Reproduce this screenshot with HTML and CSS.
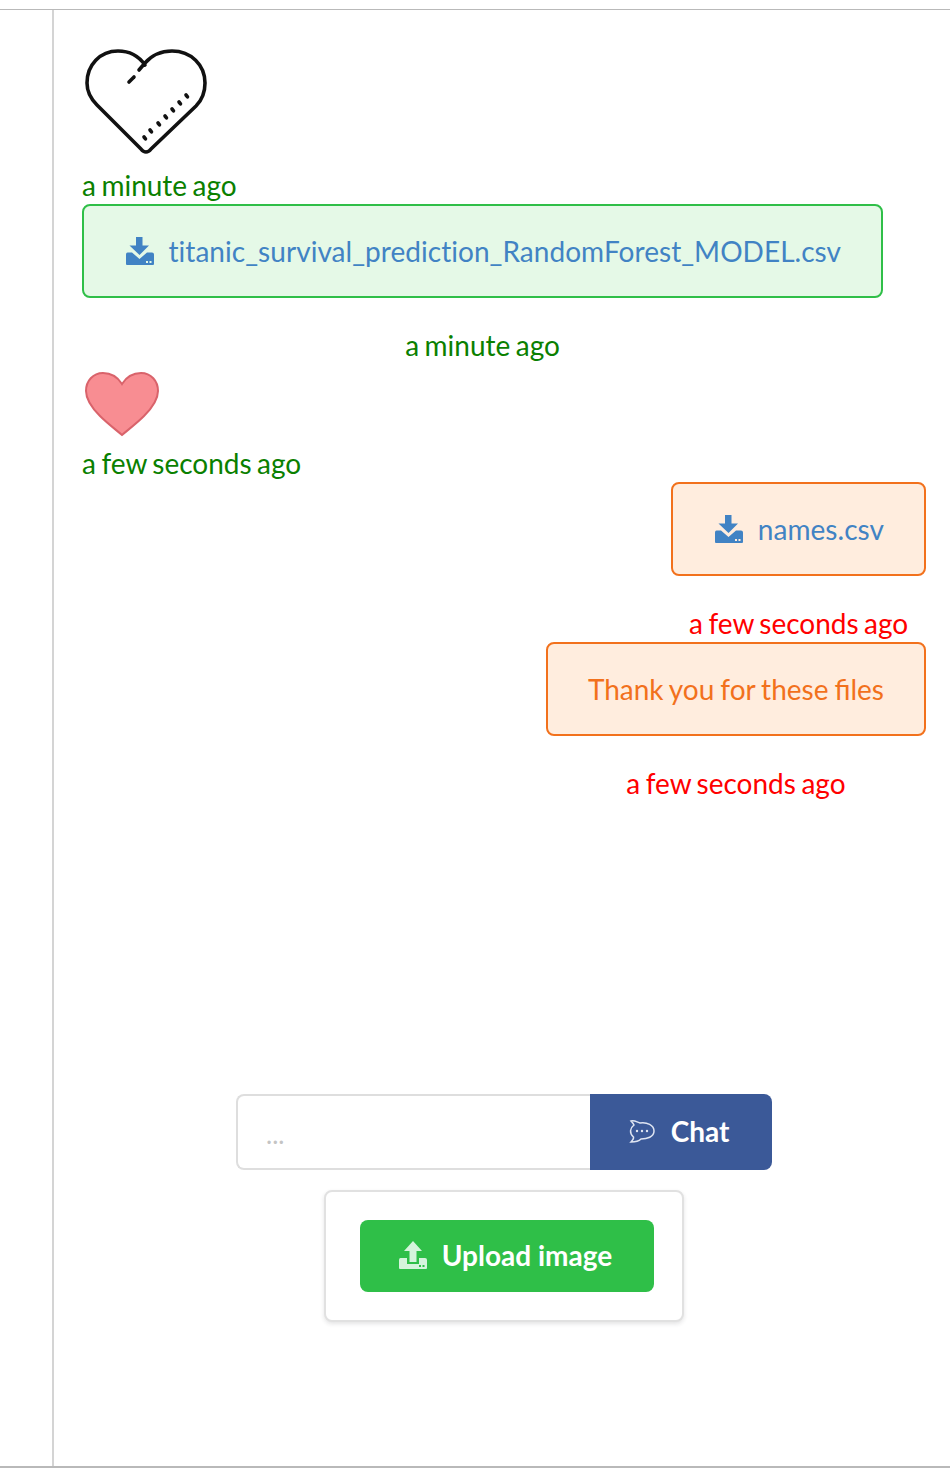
FILE: index.html
```html
<!DOCTYPE html>
<html lang="en">
<head>
  <meta charset="UTF-8">
  <title>Chat</title>
  <link rel="stylesheet" href="styles.css">
</head>
<body>
  <div class="frame">
    <div class="rail"></div>
    <div class="main">
      <div class="messages">

        <div class="msg">
          <svg class="heart-outline" viewBox="0 0 126 110" fill="none" stroke="#111" stroke-width="3.6" stroke-linecap="round" stroke-linejoin="round">
            <path d="M63 19 C56 9 47 5 36 5 C18 5 5 19 5 37 C5 46 9 53 15 59 L59 103 C62 107 66 107 69 103 L114 60 C120 54 123 46 123 37 C123 19 109 5 90 5 C79 5 70 9 63 17 L57 24"/>
            <path d="M52 31 L47 36"/>
            <path d="M62 91 l1.500 1.800 M68 84 l1.500 1.800 M76 77 l1.500 1.800 M83 70 l1.500 1.800 M90 63 l1.500 1.800 M97 56 l1.500 1.800 M104 49 l1.500 1.800"/>
          </svg>
          <div class="time time-green">a minute ago</div>
        </div>

        <div class="msg msg-file">
          <div class="box box-green">
            <a class="file-link" href="#">
              <svg class="tray-icon" viewBox="0 0 30 30"><path fill="#4183c4" d="M12 1 H18.500 V9.500 H25 L15.500 19 L5.500 9.500 H12 Z"/><path fill="#4183c4" d="M3.500 16.500 H8 L15.500 23 L23 16.500 H28 Q30 16.500 30 18.500 V28 Q30 29 29 29 H3 Q2 29 2 28 V18.500 Q2 16.500 3.500 16.500 Z"/><path fill="#e5f9e7" d="M22 25 h2 v2 h-2z M25.500 25 h2 v2 h-2z"/></svg>
              titanic_survival_prediction_RandomForest_MODEL.csv
            </a>
          </div>
          <div class="time time-green">a minute ago</div>
        </div>

        <div class="msg msg-like">
          <svg class="heart-full" viewBox="0 0 76 66">
            <path fill="#f88d92" stroke="#d9636b" stroke-width="2" d="M38 13 C33 5 27 2 19 2 C9 2 2 10 2 20 C2 30 9 38 16 45 C23 52 31 58 38 64 C45 58 53 52 60 45 C67 38 74 30 74 20 C74 10 67 2 57 2 C49 2 43 5 38 13 Z"/>
          </svg>
          <div class="time time-green">a few seconds ago</div>
        </div>

        <div class="msg msg-file msg-right">
          <div class="box box-orange">
            <a class="file-link" href="#">
              <svg class="tray-icon" viewBox="0 0 30 30"><path fill="#4183c4" d="M12 1 H18.500 V9.500 H25 L15.500 19 L5.500 9.500 H12 Z"/><path fill="#4183c4" d="M3.500 16.500 H8 L15.500 23 L23 16.500 H28 Q30 16.500 30 18.500 V28 Q30 29 29 29 H3 Q2 29 2 28 V18.500 Q2 16.500 3.500 16.500 Z"/><path fill="#ffedde" d="M22 25 h2 v2 h-2z M25.500 25 h2 v2 h-2z"/></svg>
              names.csv
            </a>
          </div>
          <div class="time time-red">a few seconds ago</div>
        </div>

        <div class="msg msg-file msg-right">
          <div class="box box-orange box-text">Thank you for these files</div>
          <div class="time time-red">a few seconds ago</div>
        </div>

      </div>

      <div class="composer">
        <div class="chat-form">
          <input class="chat-input" type="text" placeholder="...">
          <button class="chat-btn" type="button">
            <svg class="chat-icon" viewBox="0 0 26 24" fill="none" stroke="#dfe5f2" stroke-width="1.500">
              <path d="M2 2 C5 1 8 3 11 4 C18 3 25 6 25 12 C25 18 18 20 12 20 C9 23 6 23 2 23 C4 21 5 20 4.500 18 C0 14 1 9 5 6 C4 4 3 3 2 2 Z"/>
              <circle cx="8" cy="12" r="1.200" fill="#dfe5f2" stroke="none"/><circle cx="13" cy="12" r="1.200" fill="#dfe5f2" stroke="none"/><circle cx="18" cy="12" r="1.200" fill="#dfe5f2" stroke="none"/>
            </svg>
            Chat
          </button>
        </div>
        <div class="upload-card">
          <button class="upload-btn" type="button">
            <svg class="tray-icon" viewBox="0 0 30 30"><path fill="#d5f4dc" d="M15 1 L24 11 H18.500 V22 H11.500 V11 H6 Z"/><path fill="#d5f4dc" d="M2.500 18 H9 V24 H21 V18 H27 Q29 18 29 20 V28 Q29 29 28 29 H2 Q1 29 1 28 V20 Q1 18 2.500 18 Z"/><path fill="#2fbf48" d="M21 25 h2 v2 h-2z M24.500 25 h2 v2 h-2z"/></svg>
            Upload image
          </button>
        </div>
      </div>
    </div>
  </div>
</body>
</html>
```

FILE: styles.css
```css
body {
  margin: 0;
  background: #fff;
  font-family: Lato, "Open Sans", sans-serif;
  font-size: 28px;
  line-height: 34px;
}

.frame {
  display: flex;
  margin-top: 9px;
  height: 1456px;
  border-top: 1px solid #b9b9b9;
  border-bottom: 2px solid #b9b9b9;
}

.rail {
  flex: none;
  width: 52px;
  border-right: 2px solid #d4d4d4;
}

.main {
  flex: 1;
  padding: 36px 24px 0 28px;
}

.messages {
  display: flex;
  flex-direction: column;
  height: 1048px;
}

.msg {
  display: flex;
  flex-direction: column;
  align-items: flex-start;
}

.msg-file {
  width: fit-content;
  align-items: center;
}

.msg-right {
  align-self: flex-end;
}

.heart-outline {
  display: block;
  width: 126px;
  height: 110px;
  margin-bottom: 14px;
}

.heart-full {
  display: block;
  width: 76px;
  height: 66px;
  margin: 7px 0 11px 2px;
}

.time {
  height: 34px;
  line-height: 30px;
  word-spacing: -1.7px;
}

.msg-file .time {
  margin-top: 32px;
}

.time-green { color: #0a8000; }
.time-red { color: #f00; }

.box {
  box-sizing: border-box;
  height: 94px;
  padding: 0 40px;
  border: 2px solid;
  border-radius: 8px;
  display: flex;
  align-items: center;
}

.box-green {
  background: #e5f9e7;
  border-color: #2fbf48;
}

.box-orange {
  background: #ffedde;
  border-color: #f2711c;
}

.box-text {
  color: #f2711c;
  word-spacing: -1.2px;
}

.file-link {
  display: flex;
  align-items: center;
  gap: 14.5px;
  color: #4183c4;
  text-decoration: none;
  font-variant-ligatures: none;
  letter-spacing: 0.04px;
}

.tray-icon {
  flex: none;
  width: 30px;
  height: 30px;
}

.composer {
  display: flex;
  flex-direction: column;
  align-items: center;
  gap: 20px;
}

.chat-form {
  display: flex;
  width: 536px;
  height: 76px;
}

.chat-input {
  box-sizing: border-box;
  flex: 1;
  min-width: 0;
  padding: 4px 28px 0;
  border: 2px solid #dedede;
  border-right: none;
  border-radius: 8px 0 0 8px;
  font: 26px Lato, sans-serif;
  outline: none;
}

.chat-input::placeholder {
  color: #c4c4c4;
}

.chat-btn {
  flex: none;
  width: 182px;
  padding: 0 4px 2px 0;
  display: flex;
  align-items: center;
  justify-content: center;
  gap: 16px;
  border: none;
  border-radius: 0 8px 8px 0;
  background: #3b5998;
  color: #fff;
  font: 700 28px Lato, sans-serif;
}

.chat-icon {
  width: 26px;
  height: 24px;
}

.upload-card {
  box-sizing: border-box;
  width: 360px;
  height: 132px;
  padding: 28px 28px 28px 34px;
  border: 2px solid #e1e1e1;
  border-radius: 8px;
  box-shadow: 0 2px 4px rgba(34, 36, 38, 0.12);
  background: #fff;
}

.upload-btn {
  width: 100%;
  height: 72px;
  padding: 0 4px 2px 0;
  display: flex;
  align-items: center;
  justify-content: center;
  gap: 14px;
  border: none;
  border-radius: 8px;
  background: #2fbf48;
  color: #fff;
  font: 700 28px Lato, sans-serif;
}
```
